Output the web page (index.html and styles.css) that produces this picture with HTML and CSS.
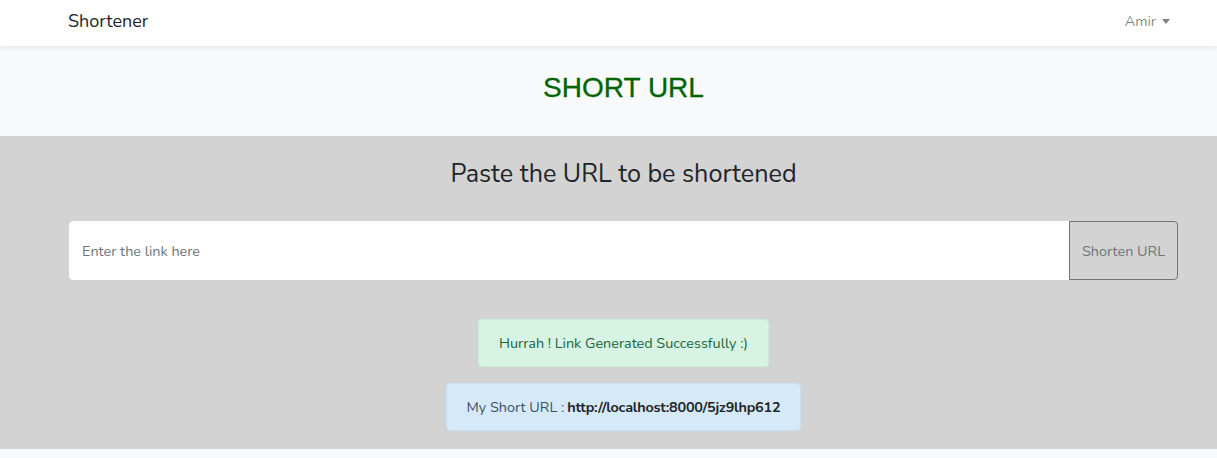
FILE: index.html
```html
<!DOCTYPE html>
<html lang="en">
<head>
<meta charset="utf-8">
<title>Shortener</title>
<link rel="stylesheet" href="styles.css">
</head>
<body>
<nav class="navbar">
  <div class="wrap nav-inner">
    <a class="brand" href="#">Shortener</a>
    <a class="user" href="#">Amir<span class="caret"></span></a>
  </div>
</nav>
<header class="hero">
  <h1 class="title">SHORT URL</h1>
</header>
<main class="panel">
  <div class="wrap">
    <h3 class="lead">Paste the URL to be shortened</h3>
    <form class="url-form">
      <input class="url-input" type="text" placeholder="Enter the link here">
      <button class="url-btn" type="button">Shorten URL</button>
    </form>
    <div class="alerts">
      <div class="alert alert-success">Hurrah ! Link Generated Successfully :)</div>
      <div class="alert alert-primary">My Short URL : <b>http://localhost:8000/5jz9lhp612</b></div>
    </div>
  </div>
</main>
<footer class="foot"></footer>
</body>
</html>
```

FILE: styles.css
```css
* { box-sizing: border-box; }
html, body { margin: 0; padding: 0; }
body {
  font-family: "Nunito", "Lato", "Open Sans", sans-serif;
  font-size: 14.4px;
  color: #212529;
  background: #f8f9fa;
}
.wrap {
  margin-left: 69px;
  width: 1109px;
}
.navbar {
  background: #fff;
  height: 46px;
  box-shadow: 0 2px 4px rgba(0,0,0,0.075);
  position: relative;
  z-index: 1;
}
.nav-inner {
  height: 46px;
  padding-bottom: 4px;
  display: flex;
  align-items: center;
  justify-content: space-between;
}
.brand {
  margin-left: -1px;
  font-size: 18px;
  color: #212529;
  text-decoration: none;
}
.user {
  margin-right: 8px;
  color: rgba(0,0,0,0.5);
  text-decoration: none;
  font-size: 14.4px;
  display: flex;
  align-items: center;
}
.caret {
  display: inline-block;
  margin-left: 6px;
  width: 0;
  height: 0;
  border-top: 5px solid rgba(0,0,0,0.5);
  border-left: 4.5px solid transparent;
  border-right: 4.5px solid transparent;
}
.hero {
  height: 90px;
  background: #f8f9fa;
  display: flex;
  align-items: center;
  justify-content: center;
  padding-left: 30px;
  padding-bottom: 6px;
}
.title {
  margin: 0;
  font-family: "Liberation Sans", Arial, sans-serif;
  font-weight: 400;
  font-size: 28px;
  color: #006400;
  -webkit-text-stroke: 0.3px #006400;
}
.panel {
  background: #d3d3d3;
  height: 313px;
  padding-top: 21px;
}
.lead {
  margin: 0;
  text-align: center;
  font-weight: 400;
  font-size: 25.2px;
  line-height: 34px;
}
.url-form {
  margin-top: 30px;
  display: flex;
  height: 59px;
}
.url-input {
  flex: 1;
  border: 1px solid #fff;
  border-radius: 4px 0 0 4px;
  background: #fff;
  padding: 0 12px;
  font-family: inherit;
  font-size: 14.4px;
  color: #495057;
  outline: none;
}
.url-input::placeholder { color: #6c757d; opacity: 1; }
.url-btn {
  width: 109px;
  background: transparent;
  border: 1px solid #6c757d;
  border-radius: 0 4px 4px 0;
  color: #6c757d;
  font-family: inherit;
  font-size: 14.4px;
  padding: 0;
}
.alerts {
  margin-top: 39px;
  display: flex;
  flex-direction: column;
  align-items: center;
  gap: 16px;
}
.alert {
  border: 1px solid transparent;
  border-radius: 4px;
  padding: 0 20px;
  height: 48px;
  display: flex;
  align-items: center;
  font-size: 14.4px;
}
.alert-success {
  background: #d7f3e3;
  border-color: #c7eed8;
  color: #1d643b;
}
.alert-primary {
  background: #d6e9f8;
  border-color: #c6e0f5;
  color: #3d4f63;
}
.alert-primary b {
  color: #212529;
  font-weight: 700;
  margin-left: 3px;
  letter-spacing: -0.2px;
}
.foot { height: 9px; background: #f8f9fa; }
```
